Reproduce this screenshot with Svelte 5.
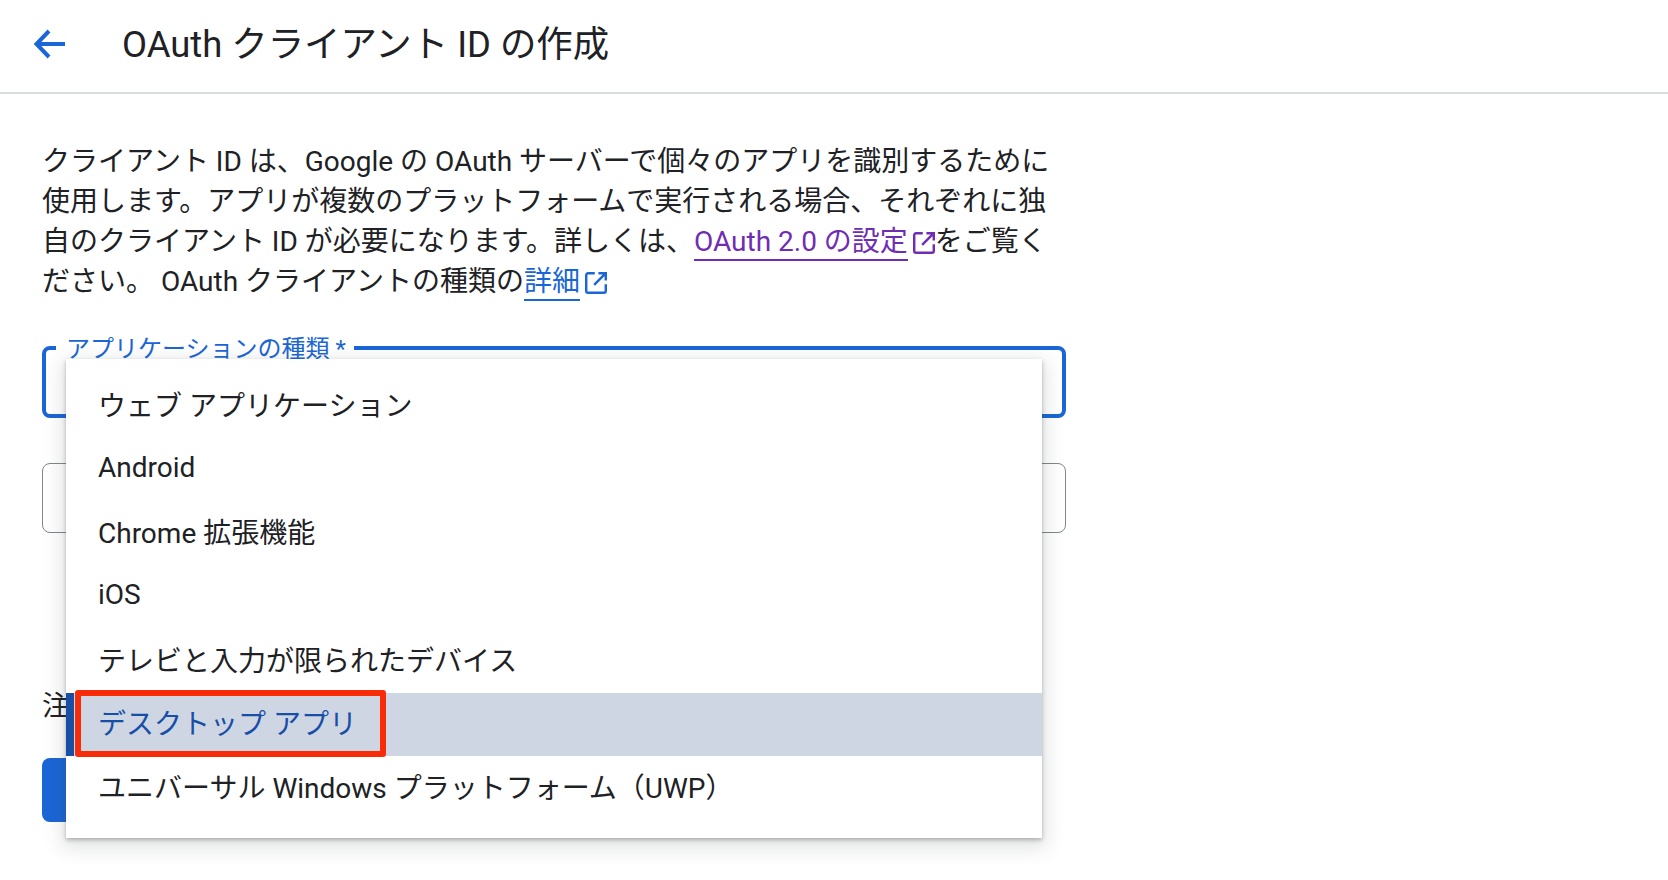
<script>
  const items = [
    'ウェブ アプリケーション',
    'Android',
    'Chrome 拡張機能',
    'iOS',
    'テレビと入力が限られたデバイス',
    'デスクトップ アプリ',
    'ユニバーサル Windows プラットフォーム（UWP）',
  ];
  const selected = 5;
</script>

{#snippet extIcon()}
  <svg class="ext" viewBox="3 3 18 18" width="22" height="22" aria-hidden="true">
    <path d="M11 4H5.500A1.500 1.500 0 0 0 4 5.500V18.500A1.500 1.500 0 0 0 5.500 20H18.500A1.500 1.500 0 0 0 20 18.500V13M14 4H20V10M20 4L10.500 13.500" fill="none" stroke="currentColor" stroke-width="2"/>
  </svg>
{/snippet}

<div class="page">
  <header class="top">
    <button type="button" class="back" aria-label="戻る">
      <svg viewBox="0 0 36 36" width="36" height="36" aria-hidden="true">
        <path d="M33 18H5M17 5L4.500 18L17 31" fill="none" stroke="currentColor" stroke-width="4"/>
      </svg>
    </button>
    <h1>OAuth クライアント ID の作成</h1>
  </header>

  <main class="content">
    <p class="intro">
      クライアント ID は、Google の OAuth サーバーで個々のアプリを識別するために<br />
      使用します。アプリが複数のプラットフォームで実行される場合、それぞれに独<br />
      自のクライアント ID が必要になります。詳しくは、<a class="visited" href="#a">OAuth 2.0 の設定</a><span class="visited icon-wrap">{@render extIcon()}</span>をご覧く<br />
      ださい。 OAuth クライアントの種類の<a href="#b">詳細</a><span class="icon-wrap blue">{@render extIcon()}</span>
    </p>

    <div class="form">
      <div class="field focus">
        <span class="label">アプリケーションの種類 *</span>
      </div>
      <div class="field"></div>
      <p class="note">注</p>
      <button type="button" class="create" aria-label="作成"></button>

      <div class="menu">
        <ul>
          {#each items as item, i}
            <li class:active={i === selected}>{item}</li>
          {/each}
        </ul>
        <div class="highlight"></div>
      </div>
    </div>
  </main>
</div>

<style>
  :global(body) {
    margin: 0;
    background: #fff;
  }

  .page {
    width: 1668px;
    height: 880px;
    overflow: hidden;
    font-family: Roboto, "Noto Sans CJK JP", sans-serif;
    color: #202124;
  }

  .top {
    display: flex;
    align-items: center;
    height: 92px;
    border-bottom: 2px solid #dadce0;
    padding-left: 32px;
  }

  .back {
    width: 36px;
    height: 36px;
    padding: 0;
    border: 0;
    margin: 0 54px 4px 0;
    background: none;
    color: #1a66d6;
  }

  h1 {
    margin: 0;
    padding-bottom: 11px;
    font-size: 36.400px;
    font-weight: 400;
  }

  .content {
    padding-left: 42px;
  }

  .intro {
    margin: 0;
    padding-top: 48px;
    font-size: 28px;
    line-height: 40px;
    white-space: nowrap;
  }

  a {
    color: #1a66d6;
    text-decoration: none;
    border-bottom: 2px solid currentColor;
    padding-bottom: 1px;
  }

  .visited {
    color: #6f2db3;
  }

  .icon-wrap {
    display: inline-block;
    vertical-align: -3px;
    margin-left: 5px;
    line-height: 0;
  }

  .blue {
    color: #1a66d6;
  }

  .form {
    position: relative;
    width: 1024px;
    padding-top: 44px;
  }

  .field {
    position: relative;
    height: 70px;
    box-sizing: border-box;
    border: 1.500px solid #80868b;
    border-radius: 8px;
    margin-bottom: 46px;
  }

  .field.focus {
    height: 72px;
    margin-bottom: 45px;
    border: 4px solid #1a66d6;
  }

  .label {
    position: absolute;
    left: 10px;
    top: -13px;
    padding: 0 8px 0 10px;
    background: #fff;
    color: #1a66d6;
    font-size: 24px;
    line-height: 24px;
    white-space: nowrap;
  }

  .note {
    margin: 0;
    padding-top: 108px;
    font-size: 28px;
    line-height: 40px;
  }

  .create {
    display: block;
    width: 240px;
    height: 64px;
    margin-top: 31px;
    border: 0;
    border-radius: 8px;
    background: #1a66d6;
  }

  .menu {
    position: absolute;
    left: 24px;
    top: 57px;
    width: 976px;
    height: 479px;
    background: #fff;
    box-shadow: 0 2px 4px rgba(60, 64, 67, 0.35), 0 6px 18px 4px rgba(60, 64, 67, 0.15);
  }

  ul {
    margin: 0;
    padding: 13px 0 0;
    list-style: none;
  }

  li {
    display: flex;
    align-items: center;
    box-sizing: border-box;
    height: 63.700px;
    padding-left: 32px;
    font-size: 28px;
    white-space: nowrap;
  }

  li.active {
    height: 63px;
    margin-top: 3px;
    padding-bottom: 5px;
    background: #cfd6e3;
    color: #174ea6;
    border-left: 8px solid #174ea6;
    padding-left: 24px;
  }

  li.active + li {
    margin-top: -2px;
  }

  .highlight {
    position: absolute;
    left: 9px;
    top: 331px;
    width: 311px;
    height: 67px;
    box-sizing: border-box;
    border: 6px solid #f92c0a;
    border-radius: 3px;
  }
</style>
